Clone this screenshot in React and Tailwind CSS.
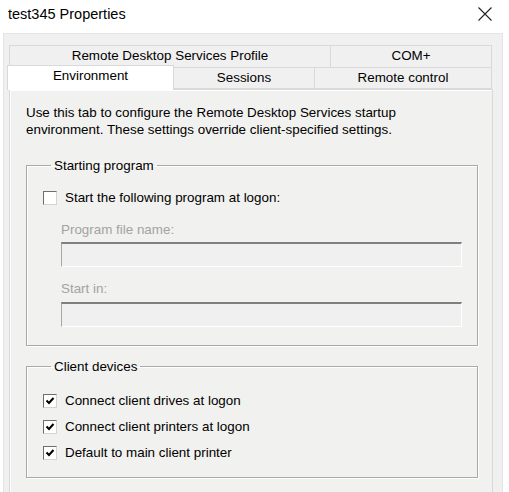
import React from "react";

const Check = ({ checked }) => (
  <span className="w-[14px] h-[14px] shrink-0 flex items-center justify-center bg-white border border-t-[#6e6e6e] border-l-[#6e6e6e] border-b-[#d4d4d4] border-r-[#d4d4d4]">
    {checked && (
      <svg width="10" height="10" viewBox="0 0 10 10">
        <path d="M1.5 4.5 L4 7 L8.5 2" fill="none" stroke="#000" strokeWidth="2" />
      </svg>
    )}
  </span>
);

const CheckRow = ({ checked, label }) => (
  <div className="flex items-center gap-[8px] h-[26px]">
    <Check checked={checked} />
    <span>{label}</span>
  </div>
);

const Group = ({ title, className, children }) => (
  <fieldset
    className={
      "border border-[#a9a9a9] shadow-[inset_1px_1px_0_#ffffff,1px_1px_0_#ffffff] " +
      className
    }
  >
    <legend className="ml-[8px] px-[3px] leading-[17px]">{title}</legend>
    {children}
  </fieldset>
);

const DisabledInput = () => (
  <div className="h-[25px] w-[401px] bg-[#f0f0f0] border border-t-[#7f7f7f] border-l-[#a8a8a8] border-r-[#ffffff] border-b-[#ffffff] border-t-2" />
);

export default function App() {
  return (
    <div
      className="w-[509px] h-[492px] bg-white overflow-hidden flex flex-col text-[13.4px] text-black"
      style={{ fontFamily: '"Liberation Sans", Arial, sans-serif' }}
    >
      {/* title bar */}
      <div className="h-[33px] shrink-0 flex items-center justify-between pl-[8px] pr-[17px]">
        <span className="text-[14.5px] pb-[4px]">test345 Properties</span>
        <svg width="14" height="14" viewBox="0 0 14 14" className="mb-[6px]">
          <path d="M0.5 0.5 L13.5 13.5 M13.5 0.5 L0.5 13.5" stroke="#222" strokeWidth="1.1" />
        </svg>
      </div>

      {/* dialog body */}
      <div className="ml-[3px] w-[500px] flex-1 bg-[#f0f0f0] border border-[#e4e4e4] border-b-0 pt-[11px] pl-[4px] flex flex-col">
        {/* tab row 1 */}
        <div className="flex h-[23px] ml-[1px]">
          <div className="w-[322px] flex items-center justify-center border border-[#d9d9d9] bg-[#f0f0f0]">
            Remote Desktop Services Profile
          </div>
          <div className="w-[161px] flex items-center justify-center border border-l-0 border-[#d9d9d9] bg-[#f0f0f0]">
            COM+
          </div>
        </div>
        {/* tab row 2 */}
        <div className="flex h-[21px] ml-[1px] relative z-10">
          <div className="w-[167px] h-[25px] -ml-[2px] -mt-[3px] flex items-center justify-center bg-white border border-[#d9d9d9] border-b-0 pb-[3px]">
            Environment
          </div>
          <div className="w-[141px] flex items-center justify-center border border-t-0 border-l-0 border-[#d9d9d9]">
            Sessions
          </div>
          <div className="w-[177px] flex items-center justify-center border border-t-0 border-l-0 border-[#d9d9d9]">
            Remote control
          </div>
        </div>

        {/* tab page */}
        <div className="ml-[1px] w-[484px] flex-1 bg-[#f1f1ef] border border-[#d9d9d9] border-b-0 shadow-[inset_1px_1px_0_#ffffff] pl-[16px] pt-[14px] flex flex-col">
          <p className="leading-[17px]">
            Use this tab to configure the Remote Desktop Services startup
            <br />
            environment. These settings override client-specified settings.
          </p>

          <Group title="Starting program" className="mt-[19px] w-[452px] h-[189px] pl-[16px] pr-[15px]">
            <div className="pt-[11px]">
              <CheckRow checked={false} label="Start the following program at logon:" />
            </div>
            <div className="pl-[18px] text-[#a3a3a3]">
              <div className="leading-[17px] mt-[10px]">Program file name:</div>
              <div className="mt-[4px]">
                <DisabledInput />
              </div>
              <div className="leading-[17px] mt-[13px]">Start in:</div>
              <div className="mt-[5px]">
                <DisabledInput />
              </div>
            </div>
          </Group>

          <Group title="Client devices" className="mt-[12px] w-[452px] h-[120px] pl-[16px]">
            <div className="pt-[13px]">
              <CheckRow checked label="Connect client drives at logon" />
              <CheckRow checked label="Connect client printers at logon" />
              <CheckRow checked label="Default to main client printer" />
            </div>
          </Group>
        </div>
      </div>
    </div>
  );
}
